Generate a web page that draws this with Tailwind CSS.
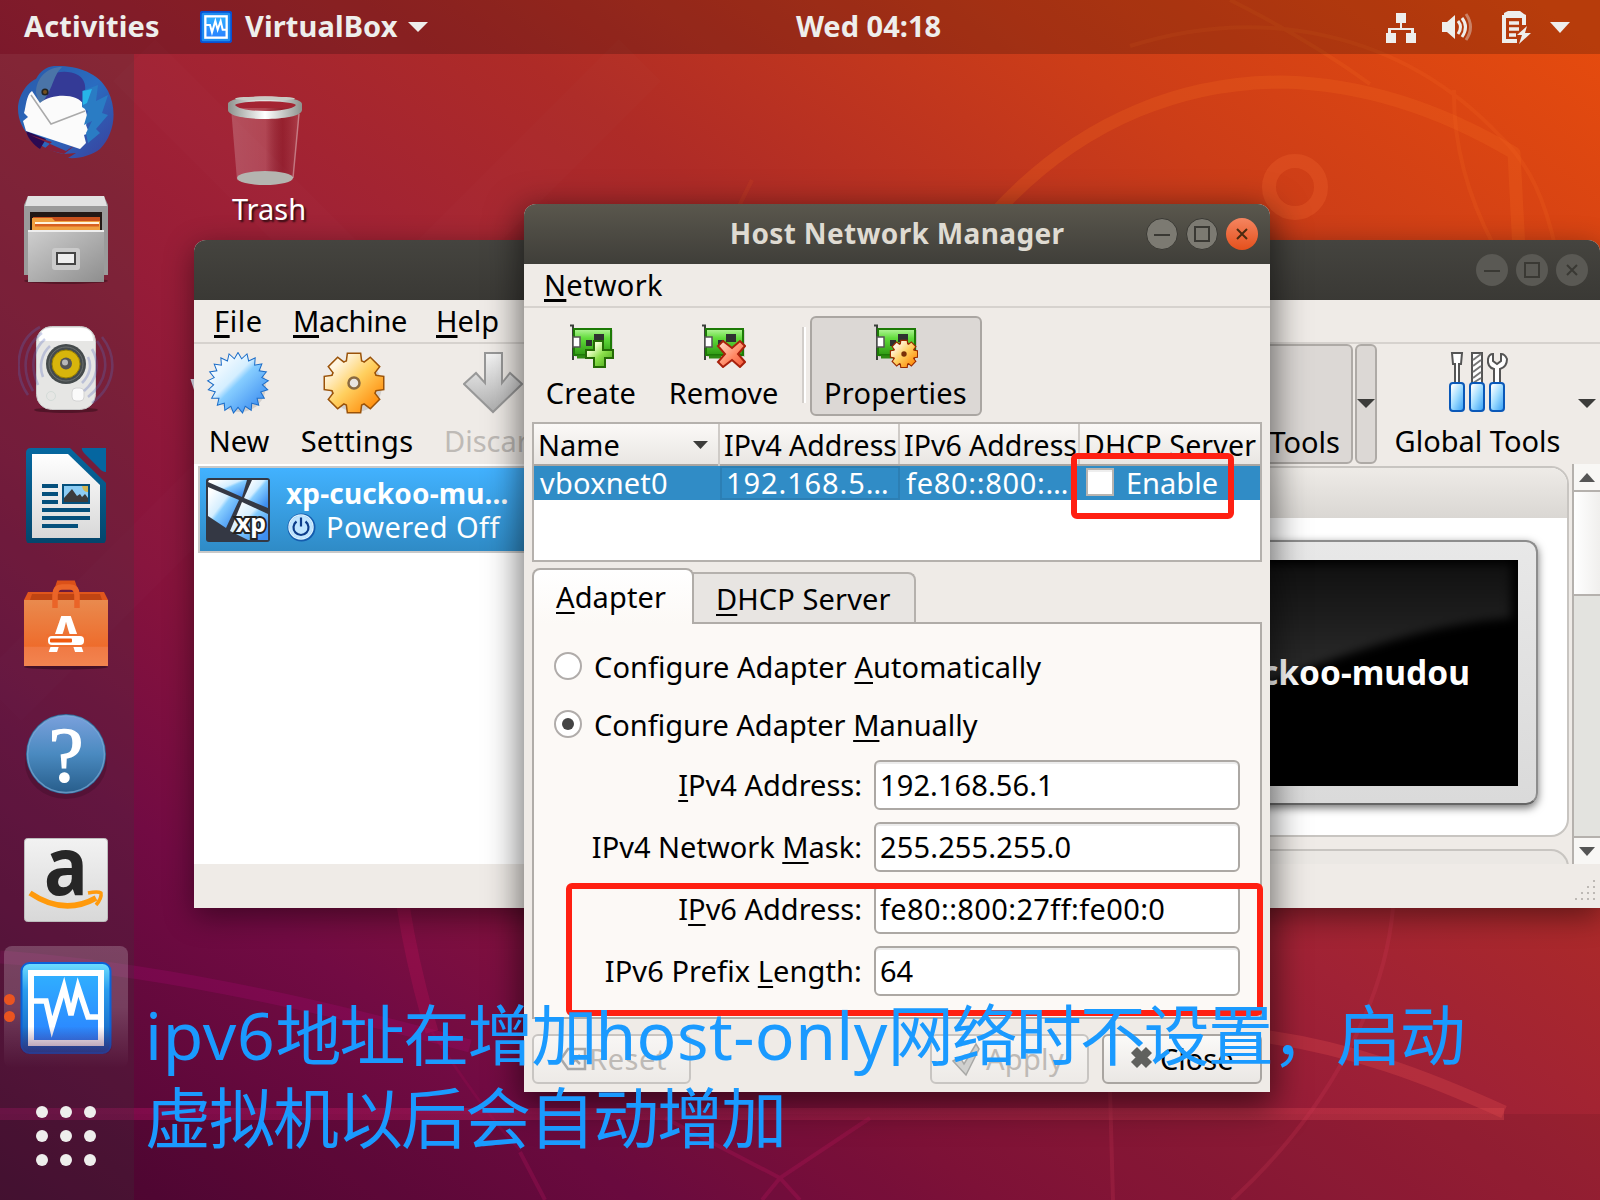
<!DOCTYPE html>
<html lang="en">
<head>
<meta charset="utf-8">
<title>VirtualBox – Host Network Manager</title>
<script src="https://cdn.jsdelivr.net/npm/@tailwindcss/browser@4"></script>
</head>
<body class="bg-[#520634]">
<svg width="0" height="0" class="absolute">
  <defs>
    <linearGradient id="vbFace" x1="0" y1="0" x2="0" y2="1"><stop offset="0" stop-color="#30b0ff"/><stop offset="1" stop-color="#2a80ff"/></linearGradient>
    <linearGradient id="vbRim" x1="0" y1="0" x2="0" y2="1"><stop offset="0" stop-color="#6fe0ff"/><stop offset=".3" stop-color="#2b9dee"/><stop offset="1" stop-color="#1258b8"/></linearGradient>
    <linearGradient id="green" x1="0" y1="0" x2="0" y2="1"><stop offset="0" stop-color="#b4f59a"/><stop offset=".35" stop-color="#62dc3c"/><stop offset="1" stop-color="#2f9a12"/></linearGradient>
    <linearGradient id="plusG" x1="0" y1="0" x2="1" y2="1"><stop offset=".25" stop-color="#f2ffd0"/><stop offset=".55" stop-color="#8be04a"/><stop offset="1" stop-color="#3c9c10"/></linearGradient>
    <linearGradient id="redX" x1="0" y1="0" x2="1" y2="1"><stop offset="0" stop-color="#ffe0d0"/><stop offset=".6" stop-color="#ff8560"/><stop offset="1" stop-color="#f2563a"/></linearGradient>
    <linearGradient id="gold" x1="0" y1="0" x2="1" y2="1"><stop offset=".2" stop-color="#fff5e0"/><stop offset=".5" stop-color="#ffd060"/><stop offset=".85" stop-color="#ff9010"/></linearGradient>
    <linearGradient id="sky" x1="0" y1="0" x2="1" y2="1"><stop offset=".1" stop-color="#ffffff"/><stop offset=".42" stop-color="#d4eeff"/><stop offset=".5" stop-color="#86cdff"/><stop offset=".9" stop-color="#3d8df0"/></linearGradient>
    <linearGradient id="handle" x1="0" y1="0" x2="1" y2="1"><stop offset=".1" stop-color="#ffffff"/><stop offset=".5" stop-color="#9fdcff"/><stop offset="1" stop-color="#2f9cf5"/></linearGradient>
    <linearGradient id="greyV" x1="0" y1="0" x2="0" y2="1"><stop offset="0" stop-color="#f5f5f5"/><stop offset="1" stop-color="#b0b0b0"/></linearGradient>
    <linearGradient id="band" gradientUnits="userSpaceOnUse" x1="0" y1="0" x2="1500" y2="0"><stop offset="0" stop-color="#b00a66"/><stop offset="1" stop-color="#d8464a"/></linearGradient>
    <g id="nic">
      <path d="M0 1.500H3V36" fill="none" stroke="#3a3f3a" stroke-width="2"/>
      <rect x="5" y="6" width="38" height="27" fill="#000" opacity=".12"/>
      <rect x="4" y="5" width="37" height="26" fill="url(#green)" stroke="#1d7a06" stroke-width="2"/>
      <rect x="3" y="13" width="7" height="10" fill="#fff" stroke="#555" stroke-width="1.500"/>
      <rect x="24" y="10" width="10" height="8" fill="#2e3230"/><rect x="16" y="16" width="6" height="6" fill="#2e3230"/>
      <path d="M7 33h12" stroke="#2f8a12" stroke-width="3"/>
    </g>
  </defs>
</svg>

<main class="relative w-[1600px] h-[1200px] overflow-hidden font-['Noto_Sans','Noto_Sans_CJK_SC',sans-serif] text-[29px] leading-none text-black whitespace-nowrap bg-[linear-gradient(to_top_right,#4d0532_0%,#560736_5%,#720b43_20%,#87133c_31%,#a02235_51%,#ae2b27_64%,#cc3d18_81%,#e54b0e_98%)]">

  <!-- wallpaper line art -->
  <svg class="absolute inset-0" width="1600" height="1200" fill="none">
    <path d="M134 60L560 486M0 700L640 60" stroke="#fff" stroke-opacity=".01" stroke-width="60"/>
    <rect y="1114" width="1600" height="86" fill="#000" fill-opacity=".07"/>
    <path d="M0 1114H1504" stroke="url(#band)" stroke-opacity=".4" stroke-width="12"/>
    <path d="M0 957C150 968 300 1000 470 1046" stroke="#b00a78" stroke-opacity=".24" stroke-width="13"/>
    <path d="M403 905C410 950 418 985 432 1032" stroke="#c8145e" stroke-opacity=".26" stroke-width="13"/>
    <path d="M432 1032C470 1090 500 1130 520 1150" stroke="#c40c60" stroke-opacity=".15" stroke-width="3"/>
    <path d="M1262 1036C1350 1048 1425 1076 1504 1112" stroke="#d8464a" stroke-opacity=".36" stroke-width="13"/>
    <path d="M1393 908C1385 1000 1330 1110 1232 1200M1110 1090L1113 1200" stroke="#d83a5a" stroke-opacity=".2" stroke-width="4"/>
    <path d="M520 1152L545 1200M665 1118L780 1178L870 1118M780 1178L762 1200M780 1178L800 1200" stroke="#d8186a" stroke-opacity=".2" stroke-width="4"/>
    <circle cx="1295" cy="187" r="26" stroke="#e85a28" stroke-opacity=".42" stroke-width="14"/>
    <path d="M996 212C1085 115 1190 82 1282 82C1370 84 1450 115 1514 153L1519 250" stroke="#f0641e" stroke-opacity=".3" stroke-width="13" stroke-linejoin="round"/>
    <path d="M1230 0C1290 30 1330 55 1370 84M1130 46C1260 5 1400 30 1500 136C1530 165 1545 200 1556 250M1454 90C1453 150 1470 200 1493 244" stroke="#f0641e" stroke-opacity=".22" stroke-width="4"/>
    <path d="M736 212L752 180" stroke="#f0641e" stroke-opacity=".12" stroke-width="4"/>
    <path d="M190.500 379L194 390V379z" fill="#e8e8f8"/>
  </svg>

  <!-- dock -->
  <nav class="absolute left-0 top-[54px] w-[134px] h-[1146px] bg-[#383838]/25 pt-[9px] pl-[18px] flex flex-col gap-8">
    <svg width="96" height="96" viewBox="0 0 96 96">
      <defs><linearGradient id="tb" x1="0" y1="0" x2="1" y2="1"><stop offset="0" stop-color="#2a58a8"/><stop offset=".5" stop-color="#2a6cc0"/><stop offset="1" stop-color="#3a3f9c"/></linearGradient></defs>
      <path d="M36 3C56 2 80 8 90 28C100 48 96 72 82 86C74 92 62 96 50 95L58 90L46 91C20 86 0 68 0 46C0 34 8 20 18 16C22 8 28 4 36 3Z" fill="url(#tb)"/>
      <path d="M8 68L28 76L22 86C16 82 10 76 8 68Z" fill="#2a0a52"/>
      <path d="M12 72L48 88L60 80L46 91L26 86L34 79" fill="#84203a"/>
      <path d="M22 22C30 8 48 6 60 12C70 18 68 30 64 40L42 34L24 42Z" fill="#343a96"/>
      <path d="M18 30C18 14 30 4 44 4C34 14 36 26 22 42Z" fill="#4a74a8"/>
      <path d="M14 28C8 32 8 44 6 50L10 54L5 58L8 68L62 86L68 80L66 72L71 70L68 62L70 56L66 42C60 30 34 30 22 40Z" fill="#fbfbfb"/>
      <path d="M13 32L33 61L67 48" fill="none" stroke="#aaa" stroke-width="1.500"/>
      <path d="M64 28L80 22L78 38L90 32L84 50L90 52L78 66L82 70L70 80L68 70L74 58L66 62L70 48L64 44Z" fill="#2a7cc4"/>
      <path d="M65 28L74 26L69 40L65 42Z" fill="#27b4e8"/>
      <circle cx="27" cy="29" r="3.600" fill="#222"/><circle cx="27" cy="29" r="2" fill="#73501e"/>
    </svg>
    <svg width="96" height="96" viewBox="0 0 96 96">
      <defs><linearGradient id="cab" x1="0" y1="0" x2="1" y2="1"><stop offset="0" stop-color="#cfcfcf"/><stop offset="1" stop-color="#8e8e8e"/></linearGradient></defs>
      <ellipse cx="48" cy="90" rx="42" ry="3" fill="#000" opacity=".3"/>
      <path d="M6 84V14L10 5H86L90 14V84Z" fill="#9b9b9b"/><path d="M7 15L10 5H86L89 15Z" fill="#e2e2e2"/>
      <rect x="12" y="21" width="72" height="20" fill="#231815"/>
      <path d="M15 39V26H82V39Z" fill="#c8501c"/><path d="M14 40V27H34L37 30H82V40Z" fill="#f0a040"/><rect x="17" y="31" width="64" height="2" fill="#fff2dc"/><rect x="17" y="33" width="64" height="2.500" fill="#d86020"/>
      <rect x="10" y="39" width="76" height="52" fill="url(#cab)"/><rect x="10" y="39" width="76" height="2" fill="#eee"/>
      <rect x="34" y="57" width="28" height="22" rx="3" fill="#cacaca"/><rect x="39" y="62" width="18" height="11" fill="#eee" stroke="#444" stroke-width="2"/>
    </svg>
    <svg width="96" height="96" viewBox="0 0 96 96">
      <ellipse cx="48" cy="91" rx="32" ry="3" fill="#000" opacity=".3"/>
      <rect x="18.500" y="7.500" width="59" height="83" rx="15" fill="#e6e6e4" stroke="#c8c8c8"/>
      <path d="M21 22Q21 9 33 9H63Q75 9 75 22Z" fill="#fff"/>
      <circle cx="48" cy="45" r="20" fill="#454b4c"/><circle cx="48" cy="45" r="17" fill="none" stroke="#6b7070"/>
      <circle cx="48" cy="45" r="14" fill="#d8b50c"/><circle cx="48" cy="45" r="14" fill="none" stroke="#9a8000"/>
      <circle cx="48" cy="44.500" r="6" fill="#555"/><circle cx="47" cy="43.500" r="3" fill="#b8b8b8"/>
      <rect x="54" y="69" width="12" height="13" rx="4" fill="#fafafa" stroke="#d4d4d4"/><circle cx="33" cy="77" r="4.500" fill="none" stroke="#d4dcd8"/>
      <g fill="none" stroke="#5b6bb8" stroke-width="2.600" stroke-opacity=".3">
        <path d="M22 8C-4 22-4 56 10 76M24 14C4 28 4 54 15 72M27 20C13 32 13 50 20 66M32 27C23 35 21 48 25 58"/>
        <path d="M84 18C100 38 98 66 74 84M79 22C92 40 90 62 70 78M74 30C82 44 80 60 66 72M70 38C74 46 72 56 64 64"/>
      </g>
    </svg>
    <svg width="96" height="96" viewBox="0 0 96 96">
      <defs><linearGradient id="wr" x1="0" y1="0" x2="0" y2="1"><stop offset="0" stop-color="#0668a0"/><stop offset="1" stop-color="#04456b"/></linearGradient><linearGradient id="pg" x1="0" y1="0" x2="0" y2="1"><stop offset="0" stop-color="#fff"/><stop offset="1" stop-color="#d8d8d8"/></linearGradient></defs>
      <path d="M13 1H52L88 36V92Q88 97 83 97H13Q8 97 8 92V6Q8 1 13 1Z" fill="url(#wr)"/>
      <path d="M64 1H88V25Q84 25 81 21L66 6Q63 2 64 1Z" fill="#0566a0"/>
      <path d="M14 7H50L82 38V91H14Z" fill="url(#pg)"/>
      <path d="M24 39h16M24 47h16M24 55h16M24 63h48M24 71h48M24 79h36" stroke="#05507c" stroke-width="3.800"/>
      <rect x="45" y="38" width="26" height="18" fill="#8ccdf4" stroke="#05507c" stroke-width="2"/><path d="M64 39h6v6q-5 0-6-6z" fill="#d2b650"/><path d="M46 55V51L54 42L59 49L62 47L64 50L67 47L70 51V55Z" fill="#3c3c3c"/>
    </svg>
    <svg width="96" height="96" viewBox="0 0 96 96">
      <defs><linearGradient id="bag" x1="0" y1="0" x2="0" y2="1"><stop offset="0" stop-color="#e98a4e"/><stop offset=".7" stop-color="#ee6c2c"/><stop offset=".72" stop-color="#f07a44"/><stop offset="1" stop-color="#f28450"/></linearGradient></defs>
      <ellipse cx="48" cy="92" rx="42" ry="2.500" fill="#000" opacity=".35"/>
      <path d="M6 25L10 17H86L90 25Z" fill="#e0561c"/><path d="M14 19H82L84 25H12Z" fill="#c04412"/>
      <path d="M37 20L41 8H55L59 20" fill="none" stroke="#dc5018" stroke-width="5"/>
      <rect x="6" y="25" width="84" height="66" fill="url(#bag)"/>
      <path d="M37 33V20Q37 12 44 12H52Q59 12 59 20V33" fill="none" stroke="#ea6428" stroke-width="5.500"/>
      <text x="48" y="77" text-anchor="middle" font-family="Noto Sans" font-weight="700" font-size="50" fill="#fff">A</text>
      <rect x="28" y="59" width="40" height="13" fill="#ef7030"/><rect x="30" y="61" width="36" height="9" rx="4" fill="#fff"/><rect x="32" y="63.500" width="22" height="4" rx="1" fill="#f05a10"/>
    </svg>
    <svg width="96" height="96" viewBox="0 0 96 96">
      <defs><linearGradient id="hp" x1="0" y1="0" x2="0" y2="1"><stop offset="0" stop-color="#7aa0dc"/><stop offset=".5" stop-color="#4a8ac0"/><stop offset="1" stop-color="#285e8c"/></linearGradient></defs>
      <ellipse cx="48" cy="60" rx="41" ry="36" fill="#000" opacity=".14"/>
      <circle cx="48" cy="51" r="40" fill="#2b6597"/><circle cx="48" cy="51" r="38.500" fill="url(#hp)" stroke="#8ab6e0" stroke-opacity=".6" stroke-width="1.500"/>
      <text x="48" y="78" text-anchor="middle" font-family="Liberation Serif" font-size="78" fill="#fff" stroke="#fff" stroke-width="1.500">?</text>
    </svg>
    <svg width="96" height="96" viewBox="0 0 96 96">
      <defs><linearGradient id="az" x1="0" y1="0" x2="0" y2="1"><stop offset="0" stop-color="#f2f2f2"/><stop offset="1" stop-color="#d8d8d8"/></linearGradient></defs>
      <rect x="6.500" y="7.500" width="83" height="83" rx="3" fill="url(#az)" stroke="#bcbcbc"/>
      <text transform="translate(48 64) scale(.92 1)" text-anchor="middle" font-family="Open Sans" font-weight="700" font-size="80" fill="#262626">a</text>
      <path d="M12 62Q46 85 78 67" fill="none" stroke="#ff9a0c" stroke-width="5.500"/><path d="M70 62Q80 60 83 62Q84 67 78 74" fill="none" stroke="#ff9a0c" stroke-width="3.500"/>
    </svg>
    <div class="relative w-[96px] h-[96px]">
      <div class="absolute -left-[14px] -top-[13px] w-[124px] h-[122px] rounded-lg bg-linear-to-b from-white/20 via-white/18 to-white/0"></div>
      <div class="absolute -left-[14px] top-[35px] w-[11px] h-[11px] rounded-full bg-[#ea5420]"></div>
      <div class="absolute -left-[14px] top-[52px] w-[11px] h-[11px] rounded-full bg-[#ea5420]"></div>
      <svg class="absolute inset-0" width="96" height="96" viewBox="0 0 96 96">
        <defs><linearGradient id="fade" x1="0" y1="0" x2="0" y2="1"><stop offset=".7" stop-color="#4c1040" stop-opacity="0"/><stop offset="1" stop-color="#4c1040" stop-opacity=".5"/></linearGradient></defs>
        <rect x="3.500" y="4" width="89" height="90" rx="8" fill="url(#vbRim)" stroke="#0a62d8" stroke-width="2"/>
        <rect x="13" y="14" width="70" height="70" fill="url(#vbFace)" stroke="#fff" stroke-width="6"/>
        <path d="M16 42H28L34 68L46 28L53 56L60 28L70 58H81" fill="none" stroke="#fff" stroke-width="5.500" stroke-linejoin="miter"/>
        <rect x="2" y="3" width="92" height="92" rx="8" fill="url(#fade)"/>
      </svg>
    </div>
    <div class="mt-[19px] ml-[18px] grid grid-cols-3 gap-3 w-[60px]">
      <i class="w-3 h-3 rounded-full bg-[#eeeeec]"></i><i class="w-3 h-3 rounded-full bg-[#eeeeec]"></i><i class="w-3 h-3 rounded-full bg-[#eeeeec]"></i>
      <i class="w-3 h-3 rounded-full bg-[#eeeeec]"></i><i class="w-3 h-3 rounded-full bg-[#eeeeec]"></i><i class="w-3 h-3 rounded-full bg-[#eeeeec]"></i>
      <i class="w-3 h-3 rounded-full bg-[#eeeeec]"></i><i class="w-3 h-3 rounded-full bg-[#eeeeec]"></i><i class="w-3 h-3 rounded-full bg-[#eeeeec]"></i>
    </div>
  </nav>

  <!-- top bar -->
  <header class="absolute inset-x-0 top-0 h-[54px] bg-black/20 text-[#eeeeec] font-bold grid grid-cols-3 items-center">
    <div class="flex items-center pl-6 leading-[50px]">
      <span class="w-[176px] tracking-[.1px] -mt-0.5">Activities</span>
      <svg width="32" height="32" viewBox="0 0 96 96"><rect x="2" y="2" width="92" height="92" rx="8" fill="#1e8cf0" stroke="#0a50d0" stroke-width="6"/><rect x="16" y="16" width="64" height="64" fill="url(#vbFace)" stroke="#fff" stroke-width="7"/><path d="M18 42H30L36 64L46 30L53 56L62 30L68 56H80" fill="none" stroke="#fff" stroke-width="6"/></svg>
      <span class="ml-[13px] -mt-0.5 tracking-[.1px]">VirtualBox</span>
      <svg class="ml-2.5" width="20" height="12"><path d="M0 1H20L10 11z" fill="#eeeeec"/></svg>
    </div>
    <div class="flex justify-center pl-[137px] -mt-1"><span>Wed 04:18</span></div>
    <div class="flex items-center justify-end pr-[30px]">
      <svg width="184" height="36" viewBox="1386 8 184 36" fill="#eeeeec">
        <path d="M1396 12h10v10h-4v5h12v5h2v10h-10V32h5v-3h-20v3h5v10h-10V32h2v-5h12v-5h-4z"/>
        <path d="M1442 21h5l8-7v24l-8-7h-5z"/><path d="M1458 20q5 6 0 13M1462 17q7 9 0 19" fill="none" stroke="#eeeeec" stroke-width="3"/><path d="M1466 13q9 13 0 26" fill="none" stroke="#eeeeec" stroke-opacity=".4" stroke-width="3"/>
        <path d="M1504 14V12L1508 10H1520L1524 13L1526 14V24H1522V17H1506V38H1517V42H1502V14Z"/><path d="M1506 14H1523" stroke="#eeeeec" stroke-width="3"/><path d="M1509 22h10M1509 28h10M1509 34h7" stroke="#eeeeec" stroke-width="3.500"/><path d="M1527 25l-10 9h5l-3 9 12-11h-6z"/>
        <path d="M1550 21h20l-10 11z"/>
      </svg>
    </div>
  </header>

  <!-- desktop icon -->
  <div class="absolute left-[212px] top-[94px] w-[106px] flex flex-col items-center text-white">
    <svg width="78" height="96" viewBox="226 94 78 96">
      <defs><linearGradient id="bin" x1="0" y1="0" x2="1" y2="0"><stop offset="0" stop-color="#fff" stop-opacity=".2"/><stop offset=".5" stop-color="#fff" stop-opacity=".16"/><stop offset=".75" stop-color="#000" stop-opacity=".08"/><stop offset="1" stop-color="#fff" stop-opacity=".12"/></linearGradient><linearGradient id="rim" x1="0" y1="0" x2="1" y2="0"><stop offset="0" stop-color="#8d928d"/><stop offset=".5" stop-color="#fff"/><stop offset="1" stop-color="#8d928d"/></linearGradient></defs>
      <path d="M231 108L237 180Q265 190 293 180L300 108Z" fill="url(#bin)"/>
      <ellipse cx="265" cy="178" rx="28" ry="7" fill="#b4b5b0"/>
      <path d="M299 114L293 178" stroke="#fff" stroke-opacity=".35" stroke-width="1.500"/>
      <path fill-rule="evenodd" d="M228 104C228 94 302 94 302 104V110C302 122 228 122 228 110ZM235 105C240 113 290 113 296 105C290 100 240 100 235 105Z" fill="url(#rim)"/>
      <ellipse cx="265" cy="98.500" rx="30" ry="2" fill="#c8cac4"/>
    </svg>
    <span class="-mt-0.5 ml-2 leading-[42px] [text-shadow:2px_2px_2px_rgba(0,0,0,.7)]">Trash</span>
  </div>

  <!-- main VirtualBox window -->
  <section class="absolute left-[194px] top-[240px] w-[1406px] h-[668px] rounded-t-xl bg-[#efebe7] flex flex-col shadow-[0_8px_30px_rgba(0,0,0,.45)] overflow-hidden">
    <div class="h-[60px] bg-linear-to-b from-[#45443f] to-[#3a3935] flex items-center justify-end gap-2 pr-3 shrink-0">
      <svg width="32" height="32"><circle cx="16" cy="16" r="16" fill="#5a5954"/><path d="M8 17h16" stroke="#3a3934" stroke-width="2"/></svg>
      <svg width="32" height="32"><circle cx="16" cy="16" r="16" fill="#5a5954"/><rect x="9" y="9" width="14" height="14" fill="none" stroke="#3a3934" stroke-width="2"/></svg>
      <svg width="32" height="32"><circle cx="16" cy="16" r="16" fill="#5a5954"/><path d="M11 11l10 10M21 11l-10 10" stroke="#3a3934" stroke-width="2"/></svg>
    </div>
    <div class="h-11 shrink-0 border-b-2 border-[#d6d2ce] flex items-center pl-5 pb-0.5">
      <span class="w-[79px] tracking-[.6px]"><u class="decoration-[3px] underline-offset-[3px]">F</u>ile</span><span class="w-[143px] tracking-[-.3px]"><u class="decoration-[3px] underline-offset-[3px]">M</u>achine</span><span><u class="decoration-[3px] underline-offset-[3px]">H</u>elp</span>
    </div>
    <div class="h-[120px] shrink-0 flex">
      <div class="w-[88px] pt-2 flex flex-col items-center">
        <svg class="shrink-0" width="64" height="64" viewBox="-32 -31 64 64">
          <defs><path id="tri" d="M0-29.500L25.500 14.700H-25.500Z"/><clipPath id="burst"><use href="#tri"/><use href="#tri" transform="rotate(17.140)"/><use href="#tri" transform="rotate(34.290)"/><use href="#tri" transform="rotate(51.430)"/><use href="#tri" transform="rotate(68.570)"/><use href="#tri" transform="rotate(85.710)"/><use href="#tri" transform="rotate(102.860)"/></clipPath></defs>
          <circle cx="2" cy="3" r="26" fill="#000" opacity=".12"/>
          <g fill="#1a6cc8" stroke="#1a6cc8" stroke-width="2"><use href="#tri"/><use href="#tri" transform="rotate(17.140)"/><use href="#tri" transform="rotate(34.290)"/><use href="#tri" transform="rotate(51.430)"/><use href="#tri" transform="rotate(68.570)"/><use href="#tri" transform="rotate(85.710)"/><use href="#tri" transform="rotate(102.860)"/></g>
          <rect x="-30" y="-30" width="60" height="60" fill="url(#sky)" clip-path="url(#burst)"/>
        </svg>
        <span class="leading-[49px] ml-0.5">New</span>
      </div>
      <div class="w-[144px] pt-2 flex flex-col items-center">
        <svg class="shrink-0" width="64" height="64" viewBox="-32 -31 64 64">
          <defs><path id="tooth" d="M-6-29H6L7-21V21L6 29H-6L-7 21V-21Z"/><clipPath id="cog"><circle r="22.500"/><use href="#tooth"/><use href="#tooth" transform="rotate(45)"/><use href="#tooth" transform="rotate(90)"/><use href="#tooth" transform="rotate(135)"/></clipPath></defs>
          <circle cx="2" cy="3" r="26" fill="#000" opacity=".12"/>
          <g fill="#9a5208" stroke="#9a5208" stroke-width="3"><circle r="22.500"/><use href="#tooth"/><use href="#tooth" transform="rotate(45)"/><use href="#tooth" transform="rotate(90)"/><use href="#tooth" transform="rotate(135)"/></g>
          <rect x="-30" y="-30" width="60" height="60" fill="url(#gold)" clip-path="url(#cog)"/>
          <circle r="5.500" fill="#e8e4e0" stroke="#8a6a40" stroke-width="2.500"/>
        </svg>
        <span class="leading-[49px] ml-1.5 tracking-[.3px]">Settings</span>
      </div>
      <div class="w-[134px] pt-2 flex flex-col items-center">
        <svg class="shrink-0" width="60" height="64" viewBox="0 0 60 64"><path d="M22 1H39V31L47 21L59 32L30 60L1 32L13 21L22 31Z" fill="url(#greyV)" stroke="#989898" stroke-width="2"/></svg>
        <span class="leading-[49px] ml-1 text-[#bebab6]">Discard</span>
      </div>
      <div class="ml-auto w-[240px] h-[120px] rounded-md border-2 border-[#aeaaa6] bg-[#dcd8d5] relative flex items-end justify-end pr-[11px] leading-[51px]">
        <i class="absolute right-[81px] top-[27px] w-2 h-2 rounded-full bg-[#555]"></i>
        <span class="-mb-[5px]">Machine Tools</span>
      </div>
      <div class="ml-0.5 w-[22px] h-[120px] rounded-md border-2 border-[#aeaaa6] bg-[#dcd8d5] flex items-center justify-center"><svg class="shrink-0" width="18" height="10"><path d="M0 0H18L9 9z" fill="#3c3c3a"/></svg></div>
      <div class="w-[201px] pt-2 flex flex-col items-center">
        <svg class="shrink-0 ml-0.5" width="62" height="64" viewBox="0 0 62 64">
          <g fill="#fff" stroke="#555" stroke-width="2">
            <path d="M4 1H14L13 12H11V32H7V12H5Z"/><rect x="24" y="1" width="10" height="31"/><path d="M46 32V17Q39 15 40 7Q41 2 45 2V9L49 12L53 9V2Q57 2 59 7Q59 15 52 17V32Z"/>
          </g>
          <path d="M25 8L33 2M25 14L33 8M25 20L33 14M25 26L33 20M25 31L33 26" stroke="#777" stroke-width="2"/>
          <g fill="url(#handle)" stroke="#0a58b8" stroke-width="2"><rect x="2" y="31" width="14" height="28" rx="3"/><rect x="22" y="31" width="14" height="28" rx="3"/><rect x="42" y="31" width="14" height="28" rx="3"/></g>
        </svg>
        <span class="leading-[49px]">Global Tools</span>
      </div>
      <div class="w-[22px] h-[120px] flex items-center"><svg width="18" height="10"><path d="M0 0H18L9 9z" fill="#3c3c3a"/></svg></div>
    </div>
    <div class="h-[400px] shrink-0 flex bg-[#efebe7]">
      <div class="w-[500px] bg-white pt-0.5 pl-1">
        <div class="h-[87px] border-2 border-[#c9c9c9] bg-linear-to-b from-[#42b2ff] to-[#2f8bc6] text-white flex items-center pl-1.5 gap-4">
          <svg width="64" height="64" viewBox="0 0 64 64">
            <rect width="64" height="64" rx="3" fill="#343844"/>
            <g fill="url(#sky)"><path d="M3 2H41L36 19L2 4Z"/><path d="M46 2H62V30L38 20Z"/><path d="M2 9L33 22L20 50L2 38Z"/><path d="M36 24L62 36V62H42L24 53Z"/></g>
            <text x="60" y="54" text-anchor="end" font-family="Noto Sans" font-weight="700" font-size="25" fill="#fff" stroke="#222" stroke-width="4" paint-order="stroke">xp</text>
          </svg>
          <div class="flex flex-col">
            <b class="text-[28px] leading-[34px] tracking-[.15px]">xp-cuckoo-mu...</b>
            <div class="flex items-center gap-2.5 leading-[34px]">
              <svg width="30" height="30" viewBox="0 0 30 30"><circle cx="15.500" cy="15.500" r="14" fill="#145cae"/><circle cx="15" cy="15" r="11.500" fill="#bfe4ff"/><circle cx="15" cy="15" r="12" fill="none" stroke="#d8f0ff" stroke-width="1.500"/><path d="M10.500 9.500a7.500 7.500 0 1 0 9 0M15 5.500v9" fill="none" stroke="#0c3c8a" stroke-width="2.200"/></svg>
              <span class="tracking-[.4px]">Powered Off</span>
            </div>
          </div>
        </div>
      </div>
      <div class="flex-1 overflow-hidden pt-0.5 flex flex-col">
        <div class="h-[371px] shrink-0 mr-[3px] border-2 border-[#c8c5c1] rounded-r-[18px] bg-white overflow-hidden">
          <div class="h-[50px] bg-linear-to-b from-[#eeebe7] to-[#dad7d3]"></div>
          <div class="pt-[22px] pr-[29px]">
            <div class="h-[265px] border-2 border-[#8d8d8d] border-b-[#666] rounded-r-xl bg-linear-to-b from-[#e8e8e8] to-[#dadada] pt-[18px] pr-[18px] shadow-[0_3px_9px_rgba(0,0,0,.55)]">
              <div class="relative overflow-hidden h-[226px] bg-black text-white font-bold text-[33.5px] flex items-center justify-end pr-[48px]">
                <svg class="absolute right-0 top-0" width="300" height="226"><defs><linearGradient id="gl" x1="0" y1="0" x2="0" y2="1"><stop offset="0" stop-color="#101010"/><stop offset="1" stop-color="#333"/></linearGradient><filter id="soft" x="-.1" y="-.1" width="1.2" height="1.2" color-interpolation-filters="sRGB"><feGaussianBlur stdDeviation="5"/></filter></defs><path d="M-30 4H293V58C200 64 120 98 -30 150Z" fill="url(#gl)" filter="url(#soft)"/></svg>
                <span class="relative">xp-cuckoo-mudou</span>
              </div>
            </div>
          </div>
        </div>
        <div class="mt-3 h-[60px] shrink-0 mr-[3px] border-2 border-[#c8c5c1] rounded-r-[18px] bg-[#ebe8e4]"></div>
      </div>
      <div class="w-7 border-l-2 border-[#b5b1ad] bg-[#e3e3df] flex flex-col">
        <div class="h-[28px] bg-[#f8f7f5] border-b-2 border-[#b5b1ad] flex items-center justify-center"><svg width="16" height="9"><path d="M0 9H16L8 0z" fill="#555"/></svg></div>
        <div class="h-[104px] border-b-2 border-[#b5b1ad] bg-linear-to-r from-white to-[#f0efed]"></div>
        <div class="mt-auto h-[28px] bg-[#f8f7f5] border-t-2 border-[#b5b1ad] flex items-center justify-center"><svg width="16" height="9"><path d="M0 0H16L8 9z" fill="#555"/></svg></div>
      </div>
    </div>
    <div class="flex-1 flex justify-end items-end pb-1 pr-0.5">
      <svg width="24" height="24" fill="#bdb9b5"><path d="M19 0h2v2h-2zM13 6h2v2h-2zM19 6h2v2h-2zM7 12h2v2H7zM13 12h2v2h-2zM19 12h2v2h-2zM1 18h2v2H1zM7 18h2v2H7zM13 18h2v2h-2zM19 18h2v2h-2z"/></svg>
    </div>
  </section>

  <!-- Host Network Manager -->
  <section class="absolute left-[524px] top-[204px] w-[746px] h-[888px] rounded-t-xl bg-[#efebe7] flex flex-col shadow-[0_10px_34px_4px_rgba(0,0,0,.55)]">
    <div class="h-[60px] shrink-0 rounded-t-xl bg-linear-to-b from-[#5a574d] to-[#3f3e39] flex items-center justify-between px-3 text-[#dfdbd2]">
      <div class="w-[112px]"></div>
      <b class="text-[28px] tracking-[.35px] -mt-0.5">Host Network Manager</b>
      <div class="w-[112px] flex gap-2">
        <svg width="32" height="32"><circle cx="16" cy="16" r="15.500" fill="#7c7a72" stroke="#3a3934"/><path d="M8 17h16" stroke="#3a3934" stroke-width="2"/></svg>
        <svg width="32" height="32"><circle cx="16" cy="16" r="15.500" fill="#7c7a72" stroke="#3a3934"/><rect x="9" y="9" width="14" height="14" fill="none" stroke="#3a3934" stroke-width="2"/></svg>
        <svg width="32" height="32"><defs><linearGradient id="cl" x1="0" y1="0" x2="0" y2="1"><stop offset="0" stop-color="#f58560"/><stop offset="1" stop-color="#e5501c"/></linearGradient></defs><circle cx="16" cy="16" r="16" fill="url(#cl)"/><path d="M11 11l10 10M21 11l-10 10" stroke="#4a2a10" stroke-width="2"/></svg>
      </div>
    </div>
    <div class="h-11 shrink-0 border-b-2 border-[#d6d2ce] flex items-center pl-[20px] pb-0.5"><span class="tracking-[.3px]"><u class="decoration-[3px] underline-offset-[3px]">N</u>etwork</span></div>
    <div class="h-[114px] shrink-0 flex pl-[8px] leading-[49px]">
      <div class="w-[118px] pt-4 flex flex-col items-center">
        <svg class="shrink-0 ml-0.5" width="44" height="44" viewBox="0 0 44 44"><use href="#nic"/><path d="M24 17H33V26H43V34H35V43H24V34H16V26H24Z" fill="url(#plusG)" stroke="#256a06" stroke-width="2"/></svg>
        <span class="tracking-[.2px]">Create</span>
      </div>
      <div class="w-[147px] pt-4 flex flex-col items-center">
        <svg class="shrink-0" width="44" height="44" viewBox="0 0 44 44"><use href="#nic"/><path d="M21 17L30 24L38 17L43 22L36 30L43 38L38 43L30 36L21 43L16 38L23 30L16 22Z" fill="url(#redX)" stroke="#a8200c" stroke-width="2"/></svg>
        <span>Remove</span>
      </div>
      <div class="w-1 h-[76px] mt-[19px] ml-[5px] border-l-2 border-r-2 border-l-[#d2ceca] border-r-white"></div>
      <div class="ml-1 mt-2 w-[172px] h-[100px] rounded-md border-2 border-[#aaa6a2] bg-[#dcd8d5] pt-1.5 flex flex-col items-center">
        <svg class="shrink-0" width="44" height="44" viewBox="0 0 44 44"><use href="#nic"/><g transform="translate(30 30) scale(.45)"><g fill="#9a2c00" stroke="#9a2c00" stroke-width="5"><circle r="24"/><use href="#tooth"/><use href="#tooth" transform="rotate(45)"/><use href="#tooth" transform="rotate(90)"/><use href="#tooth" transform="rotate(135)"/></g><rect x="-30" y="-30" width="60" height="60" fill="url(#gold)" clip-path="url(#cog)"/><circle r="6" fill="#7a3008"/></g></svg>
        <span class="mr-px tracking-[.2px]">Properties</span>
      </div>
    </div>
    <div class="mx-2 h-[140px] shrink-0 border-2 border-[#b5b1ad] bg-white">
      <div class="h-[42px] grid grid-cols-[186px_180px_180px_1fr] border-b-2 border-[#a9a5a1] bg-linear-to-b from-[#fbf9f7] to-[#e9e6e3] leading-[42px]">
        <div class="border-r-2 border-[#cfcbc7] pl-1 pr-2.5 flex items-center justify-between"><span>Name</span><svg width="15" height="9"><path d="M0 0H15L7.500 8z" fill="#3c3c3a"/></svg></div>
        <div class="border-r-2 border-[#cfcbc7] h-10 pl-1 overflow-hidden text-[28.5px]">IPv4 Address</div>
        <div class="border-r-2 border-[#cfcbc7] h-10 pl-1 overflow-hidden text-[28.5px]">IPv6 Address</div>
        <div class="pl-1 h-10 text-[28.5px] tracking-[.15px]">DHCP Server</div>
      </div>
      <div class="h-[34px] grid grid-cols-[186px_180px_180px_1fr] bg-[#308cc6] text-white leading-[34px]">
        <div class="pl-1.5 tracking-[.2px]">vboxnet0</div>
        <div class="pl-1 h-[34px] border-2 border-[#2c7fb4] leading-[30px] tracking-[.9px]">192.168.5…</div>
        <div class="pl-1.5 tracking-[.7px]">fe80::800:…</div>
        <div class="flex items-center pl-1.5 gap-3 h-[34px]"><i class="w-7 h-7 -mt-0.5 border-2 border-[#b8b4b0] bg-white shadow-[inset_0_2px_0_#eee]"></i><span class="h-[34px]">Enable</span></div>
      </div>
    </div>
    <div class="mx-2 mt-1.5 h-[54px] shrink-0 flex">
      <div class="relative w-[162px] h-14 border-2 border-b-0 border-[#b0aca8] rounded-t-lg bg-linear-to-b from-white to-[#fcf9f6] pl-[22px] leading-[54px] tracking-[.1px] z-10"><u class="decoration-2 underline-offset-4">A</u>dapter</div>
      <div class="-ml-0.5 mt-1 w-[224px] h-[50px] border-2 border-b-0 border-[#b5b1ad] rounded-tr-lg bg-[#e8e5e2] pl-[22px] leading-[50px] tracking-[.1px]"><u class="decoration-2 underline-offset-4">D</u>HCP Server</div>
    </div>
    <div class="mx-2 h-[397px] shrink-0 border-2 border-[#b0aca8] bg-[#fcf9f6] pt-[13px] flex flex-col">
      <label class="h-[58px] flex items-center pl-5 gap-3"><i class="w-7 h-7 rounded-full border-2 border-[#b0acaa] bg-white"></i><span class="tracking-[.07px]">Configure Adapter <u class="decoration-2 underline-offset-4">A</u>utomatically</span></label>
      <label class="h-[58px] flex items-center pl-5 gap-3"><i class="w-7 h-7 rounded-full border-2 border-[#b0acaa] bg-white flex items-center justify-center"><i class="w-3 h-3 rounded-full bg-[#444]"></i></i><span>Configure Adapter <u class="decoration-2 underline-offset-4">M</u>anually</span></label>
      <div class="h-[62px] mt-px flex items-center gap-3"><span class="w-[328px] -mt-0.5 text-right"><u class="decoration-2 underline-offset-4">I</u>Pv4 Address:</span><div class="w-[366px] h-[50px] border-2 border-[#aca8a4] rounded-md bg-white shadow-[inset_0_2px_0_#ececec] pl-1 leading-[46px] tracking-[.1px]">192.168.56.1</div></div>
      <div class="h-[62px] flex items-center gap-3"><span class="w-[328px] -mt-0.5 text-right">IPv4 Network <u class="decoration-2 underline-offset-4">M</u>ask:</span><div class="w-[366px] h-[50px] border-2 border-[#aca8a4] rounded-md bg-white shadow-[inset_0_2px_0_#ececec] pl-1 leading-[46px] tracking-[.15px]">255.255.255.0</div></div>
      <div class="h-[62px] flex items-center gap-3"><span class="w-[328px] -mt-0.5 text-right">I<u class="decoration-2 underline-offset-4">P</u>v6 Address:</span><div class="w-[366px] h-[50px] border-2 border-[#aca8a4] rounded-md bg-white shadow-[inset_0_2px_0_#ececec] pl-1 leading-[46px] tracking-[.38px]">fe80::800:27ff:fe00:0</div></div>
      <div class="h-[62px] flex items-center gap-3"><span class="w-[328px] -mt-0.5 text-right tracking-[.1px]">IPv6 Prefix <u class="decoration-2 underline-offset-4">L</u>ength:</span><div class="w-[366px] h-[50px] border-2 border-[#aca8a4] rounded-md bg-white shadow-[inset_0_2px_0_#ececec] pl-1 leading-[46px]">64</div></div>
    </div>
    <div class="mx-2 mt-[15px] flex gap-[13px] leading-[46px]">
      <div class="w-[159px] h-[50px] mr-auto border-2 border-[#c8c5c2] rounded-md bg-linear-to-b from-[#f8f6f4] to-[#edeae7] text-[#bebab6] flex items-center pl-[25px] gap-0.5">
        <svg width="28" height="24" viewBox="0 0 28 24" fill="none" stroke="#a8a8a8" stroke-width="2.500"><path d="M9 2H26V22H9L2 12Z"/><path d="M12 8l9 9M21 8l-9 9"/></svg><span class="tracking-[.6px]">Reset</span>
      </div>
      <div class="w-[159px] h-[50px] border-2 border-[#c8c5c2] rounded-md bg-linear-to-b from-[#f8f6f4] to-[#edeae7] text-[#bebab6] flex items-center pl-5 gap-1.5">
        <svg width="28" height="36" viewBox="0 0 28 36"><path d="M1 20L8 16L12 23L24 3L27 8L14 34Z" fill="#d0d0ce" stroke="#a8a8a6" stroke-width="1.500"/></svg><span class="tracking-[.3px]">Apply</span>
      </div>
      <div class="w-[160px] h-[50px] border-2 border-[#a9a5a1] rounded-md bg-linear-to-b from-[#fbfaf8] to-[#eae7e4] flex items-center pl-[25px] gap-1.5">
        <svg class="-mt-1" width="25" height="25" viewBox="0 0 25 25"><path d="M5 5L20 20M20 5L5 20" stroke="#60615e" stroke-width="8.500"/></svg><span>Close</span>
      </div>
    </div>
  </section>

  <!-- annotations -->
  <div class="absolute left-[1071px] top-[453px] w-[163px] h-[66px] border-[6px] border-[#ff2012] rounded-md"></div>
  <div class="absolute left-[566px] top-[883px] w-[697px] h-[133px] border-[6px] border-[#ff2012] rounded-md"></div>
  <p class="absolute left-[145px] top-[993px] text-[66px] leading-[83px] tracking-[-2px] text-[#1a9aff]"><span class="tracking-[.7px]">ipv6</span>地址在增加<span class="tracking-[.4px]">host-only</span>网络时不设置，启动<br>虚拟机以后会自动增加</p>
</main>
</body>
</html>
